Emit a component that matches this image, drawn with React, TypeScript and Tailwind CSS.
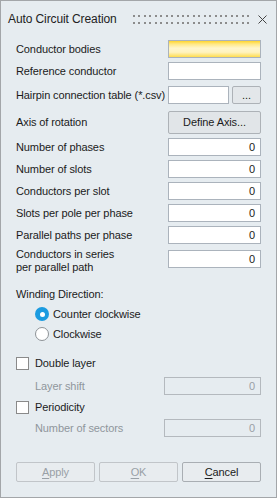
import React from 'react';

const Field: React.FC<{ value?: string; className?: string; disabled?: boolean }> = ({ value, className = 'w-[93px]', disabled }) => (
  <div
    className={`${className} h-[18px] border flex items-center justify-end pr-[5px] ${
      disabled ? 'border-[#b4b9be] bg-[#e6ecf0] text-[#9aa0a6]' : 'border-[#abb3bc] bg-white text-[#1b1b1b]'
    }`}
  >
    {value}
  </div>
);

const Row: React.FC<{ label: string; value?: string; className?: string }> = ({ label, value, className = '' }) => (
  <div className={`flex items-center justify-between h-[18px] ${className}`}>
    <span>{label}</span>
    <Field value={value} />
  </div>
);

const Dots: React.FC = () => (
  <svg width="118" height="9" className="block">
    {Array.from({ length: 22 }).map((_, i) => (
      <g key={i} fill="#8c8c8c">
        <rect x={Math.round(i * 5.44)} y={0} width={2} height={2} />
        <rect x={Math.round(i * 5.44)} y={7} width={2} height={2} />
      </g>
    ))}
  </svg>
);

const Radio: React.FC<{ checked?: boolean; label: string }> = ({ checked, label }) => (
  <div className="flex items-center gap-[4px] h-[20px] pl-[19px]">
    {checked ? (
      <span className="w-[14px] h-[14px] rounded-full bg-[#1b9be0] flex items-center justify-center">
        <span className="w-[5px] h-[5px] rounded-full bg-white" />
      </span>
    ) : (
      <span className="w-[14px] h-[14px] rounded-full bg-white border border-[#8d9296]" />
    )}
    <span>{label}</span>
  </div>
);

const Check: React.FC<{ label: string; className?: string }> = ({ label, className = '' }) => (
  <div className={`flex items-center gap-[6px] h-[20px] ${className}`}>
    <span className="w-[13px] h-[13px] bg-white border border-[#8a8a8a]" />
    <span>{label}</span>
  </div>
);

const Button: React.FC<{ accel: string; rest: string; disabled?: boolean }> = ({ accel, rest, disabled }) => (
  <button
    className={`flex-1 h-[20px] border rounded-[2px] bg-[#e8ecef] ${
      disabled ? 'border-[#c1c5c9] text-[#99a0a6]' : 'border-[#a9aeb3] text-[#1b1b1b]'
    }`}
  >
    <span className="underline underline-offset-2">{accel}</span>
    {rest}
  </button>
);

const App: React.FC = () => {
  return (
    <div className="w-[277px] h-[498px] border border-[#a3a6a9] bg-[#e6ecf0] flex flex-col font-['Liberation_Sans',Arial,sans-serif] text-[11px] leading-[13px] tracking-[-0.1px] text-[#1b1b1b]">
      {/* title bar */}
      <div className="h-[36px] flex items-center pl-[7px] pr-[9px]">
        <span className="text-[12px] text-[#222]">Auto Circuit Creation</span>
        <div className="ml-auto">
          <Dots />
        </div>
        <svg width="9" height="9" className="ml-[7px]" stroke="#444" strokeWidth="1">
          <path d="M0.5 0.5 L8.5 8.5 M8.5 0.5 L0.5 8.5" />
        </svg>
      </div>

      <div className="flex flex-col px-[15px]">
        <div className="flex items-center justify-between h-[18px] mt-[3px]">
          <span>Conductor bodies</span>
          <div className="w-[93px] h-[18px] border border-[#abb3bc] bg-[linear-gradient(to_bottom,#ffd52e_0%,#ffe98a_20%,#fff6cc_45%,#fff3c0_70%,#ffdd50_100%)]" />
        </div>
        <Row label="Reference conductor" className="mt-[4px]" />
        <div className="flex items-center justify-between h-[18px] mt-[6px]">
          <span>Hairpin connection table (*.csv)</span>
          <div className="flex gap-[3px]">
            <Field className="w-[61px]" />
            <button className="w-[29px] h-[18px] border border-[#adb2b7] rounded-[2px] bg-[#e3e7ea] leading-[10px]">
              ...
            </button>
          </div>
        </div>
        <div className="flex items-center justify-between h-[23px] mt-[7px]">
          <span>Axis of rotation</span>
          <button className="w-[93px] h-[23px] border border-[#adb2b7] rounded-[2px] bg-[#e1e5e8]">
            Define Axis...
          </button>
        </div>
        <Row label="Number of phases" value="0" className="mt-[4px]" />
        <Row label="Number of slots" value="0" className="mt-[4px]" />
        <Row label="Conductors per slot" value="0" className="mt-[4px]" />
        <Row label="Slots per pole per phase" value="0" className="mt-[4px]" />
        <Row label="Parallel paths per phase" value="0" className="mt-[4px]" />
        <div className="flex items-start justify-between mt-[4px]">
          <span>
            Conductors in series
            <br />
            per parallel path
          </span>
          <div className="mt-[2px]">
            <Field value="0" />
          </div>
        </div>

        <div className="mt-[14px]">Winding Direction:</div>
        <div className="mt-[3px]">
          <Radio checked label="Counter clockwise" />
          <Radio label="Clockwise" />
        </div>

        <Check label="Double layer" className="mt-[9px]" />
        <div className="flex items-center justify-between h-[18px] mt-[4px]">
          <span className="pl-[19px] text-[#8f969c]">Layer shift</span>
          <Field value="0" className="w-[97px]" disabled />
        </div>
        <Check label="Periodicity" className="mt-[2px]" />
        <div className="flex items-center justify-between h-[18px] mt-[2px]">
          <span className="pl-[19px] text-[#8f969c]">Number of sectors</span>
          <Field value="0" className="w-[97px]" disabled />
        </div>

        <div className="flex gap-[4px] mt-[25px]">
          <Button accel="A" rest="pply" disabled />
          <Button accel="O" rest="K" disabled />
          <Button accel="C" rest="ancel" />
        </div>
      </div>
    </div>
  );
};

export default App;
